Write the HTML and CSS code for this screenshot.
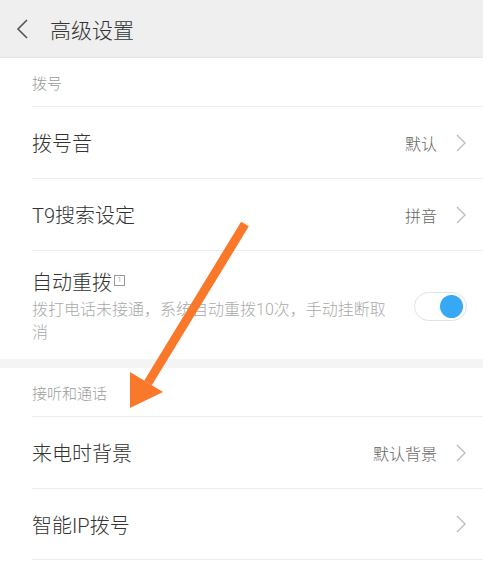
FILE: index.html
```html
<!DOCTYPE html>
<html lang="zh">
<head>
<meta charset="utf-8">
<link rel="stylesheet" href="styles.css">
</head>
<body>
<div class="screen">
  <header class="topbar">
    <svg class="back" width="14" height="20" viewBox="0 0 14 20"><path d="M11 1 L2 10 L11 19" fill="none" stroke="#555" stroke-width="1.6"/></svg>
    <span class="title">高级设置</span>
  </header>

  <div class="group">
    <div class="label">拨号</div>
    <div class="row">
      <span class="name">拨号音</span>
      <span class="value">默认</span>
      <svg class="chev" width="10" height="18" viewBox="0 0 10 18"><path d="M1 1 L9 9 L1 17" fill="none" stroke="#bbb" stroke-width="1.3"/></svg>
    </div>
    <div class="row">
      <span class="name">T9搜索设定</span>
      <span class="value">拼音</span>
      <svg class="chev" width="10" height="18" viewBox="0 0 10 18"><path d="M1 1 L9 9 L1 17" fill="none" stroke="#bbb" stroke-width="1.3"/></svg>
    </div>
    <div class="row tall">
      <div class="text">
        <div class="name">自动重拨<span class="badge">1</span></div>
        <div class="desc">拨打电话未接通，系统自动重拨10次，手动挂断取消</div>
      </div>
      <div class="toggle"><span class="knob"></span></div>
    </div>
  </div>

  <div class="band"></div>

  <div class="group">
    <div class="label">接听和通话</div>
    <div class="row">
      <span class="name">来电时背景</span>
      <span class="value">默认背景</span>
      <svg class="chev" width="10" height="18" viewBox="0 0 10 18"><path d="M1 1 L9 9 L1 17" fill="none" stroke="#bbb" stroke-width="1.3"/></svg>
    </div>
    <div class="row">
      <span class="name">智能IP拨号</span>
      <svg class="chev" width="10" height="18" viewBox="0 0 10 18"><path d="M1 1 L9 9 L1 17" fill="none" stroke="#bbb" stroke-width="1.3"/></svg>
    </div>
  </div>

  <svg class="arrow" width="483" height="583" viewBox="0 0 483 583">
    <line x1="245" y1="224" x2="148" y2="383" stroke="#fa782a" stroke-width="9"/>
    <polygon points="130,372 163,392 130,408" fill="#fa782a"/>
  </svg>
</div>
</body>
</html>
```

FILE: styles.css
```css
* { box-sizing: border-box; }
html, body { margin: 0; padding: 0; }
body {
  width: 483px;
  height: 583px;
  overflow: hidden;
  background: #fff;
  font-family: "Roboto", "Noto Sans CJK SC", sans-serif;
  font-weight: 300;
  color: #333;
}
.screen { position: relative; width: 483px; height: 583px; }

.topbar {
  height: 58px;
  background: #efefef;
  display: flex;
  align-items: center;
  padding-left: 16px;
  border-bottom: 1px solid #e4e4e4;
}
.back { margin-right: 20px; }
.title { font-size: 21px; color: #333; }

.group { padding-left: 32px; }
.label {
  height: 48px;
  padding-top: 14px;
  font-size: 15px;
  color: #9a9a9a;
  line-height: 24px;
}
.row {
  display: flex;
  align-items: center;
  height: 72px;
  border-top: 1px solid #ececec;
  padding-right: 17px;
}
.row .name { font-size: 20px; color: #333; flex: 1; }
.row .value { font-size: 16px; color: #666; margin-right: 19px; }
.chev { flex: none; }

.row.tall { height: 109px; align-items: flex-start; padding-top: 17px; padding-right: 16px; }
.text { flex: 1; }
.text .name { line-height: 30px; display: flex; align-items: center; }
.badge {
  display: inline-flex;
  align-items: center;
  justify-content: center;
  width: 11px;
  height: 11px;
  border: 1px solid #999;
  font-size: 8px;
  color: #777;
  margin-left: 2px;
  margin-top: -6px;
  line-height: 1;
}
.desc { font-size: 16px; color: #aaa; line-height: 23px; padding-right: 16px; }
.toggle {
  margin-top: 24px;
  width: 53px;
  height: 29px;
  border-radius: 15px;
  border: 1px solid #e2e2e2;
  background: #fff;
  position: relative;
  flex: none;
}
.knob {
  position: absolute;
  right: 3px;
  top: 2px;
  width: 23px;
  height: 23px;
  border-radius: 50%;
  background: #37a8f4;
}

.band { height: 9px; background: #f4f4f4; }

.group:last-of-type .row:last-child { border-bottom: 1px solid #ececec; }

.arrow { position: absolute; left: 0; top: 0; pointer-events: none; }
```
